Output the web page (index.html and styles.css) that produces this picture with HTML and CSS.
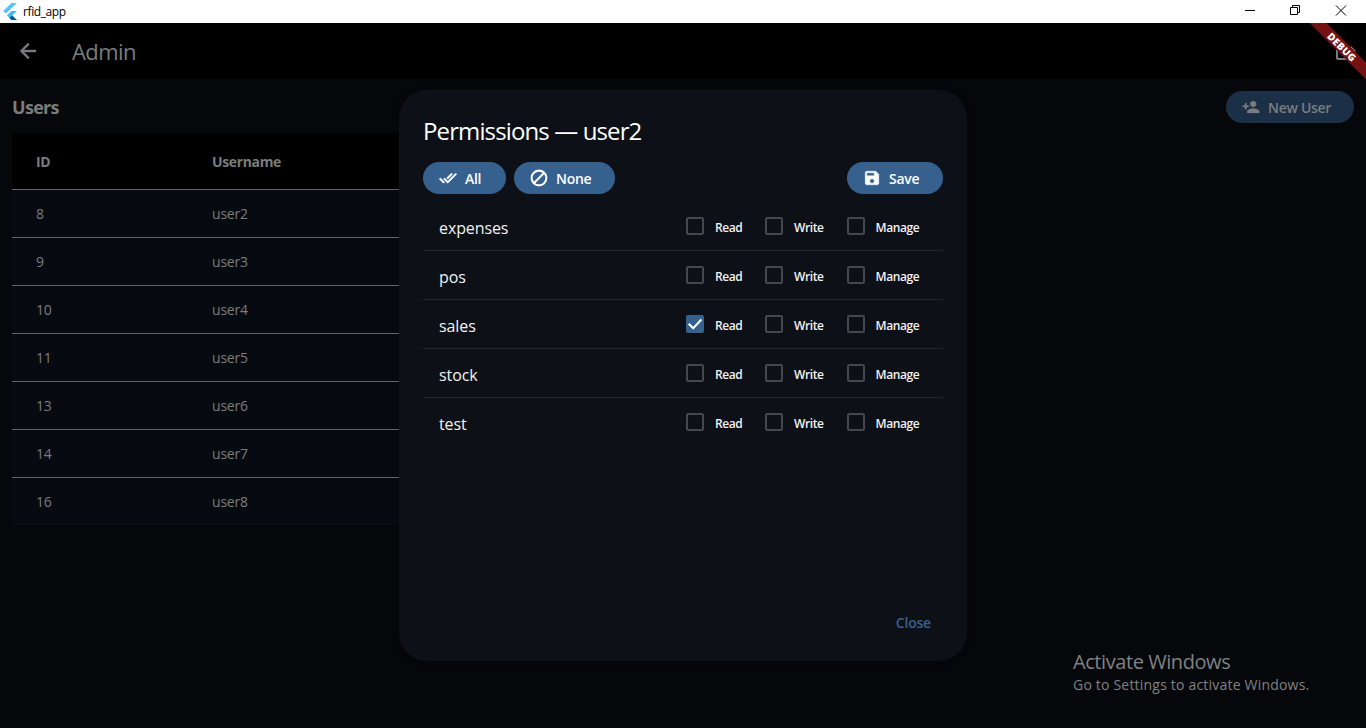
FILE: index.html
```html
<!DOCTYPE html>
<html lang="en">
<head>
<meta charset="utf-8">
<title>rfid_app</title>
<link rel="stylesheet" href="styles.css">
</head>
<body>
<div class="window">
  <header class="titlebar">
    <svg class="logo" width="14" height="17" viewBox="0 0 24 30"><path d="M14.500 0H24L5 18.500 0 14z" fill="#54c5f8"/><path d="M14.500 14H24L16 22l8 8h-9.500l-8-8z" fill="#45b8f0"/><path d="M11 26l5-4 8 8h-9.500z" fill="#01579b"/></svg>
    <span class="window-name">rfid_app</span>
    <svg class="controls" width="130" height="23" viewBox="0 0 130 23" fill="none" stroke="#000"><path d="M9 10.500h10"/><path d="M54.500 7.500h7v7h-7zM56.500 7V5.500h7v7H62"/><path d="M100 5.500l10 10m0-10l-10 10"/></svg>
  </header>
  <div class="appbar">
    <svg class="back" width="24" height="24" viewBox="0 0 24 24" fill="currentColor" stroke="currentColor" stroke-width=".4"><path d="M20 11H7.830l5.590-5.590L12 4l-8 8 8 8 1.410-1.410L7.830 13H20z"/></svg>
    <h1 class="admin">Admin</h1>
    <svg class="logout" width="24" height="24" viewBox="0 0 24 24" fill="currentColor"><path d="M17 7l-1.410 1.410L18.170 11H8v2h10.170l-2.580 2.580L17 17l5-5zM4 5h8V3H4c-1.100 0-2 .9-2 2v14c0 1.100.9 2 2 2h8v-2H4z"/></svg>
    <div class="debug"><span>DEBUG</span></div>
  </div>
  <main class="page">
    <div class="page-head">
      <h2 class="users">Users</h2>
      <button class="pill new-user"><svg width="18" height="18" viewBox="0 0 24 24" fill="currentColor" stroke="currentColor" stroke-width=".4"><path d="M15 12c2.210 0 4-1.790 4-4s-1.790-4-4-4-4 1.790-4 4 1.790 4 4 4zm-9-2V7H4v3H1v2h3v3h2v-3h3v-2H6zm9 4c-2.670 0-8 1.340-8 4v2h16v-2c0-2.660-5.330-4-8-4z"/></svg><span>New User</span></button>
    </div>
    <div class="table">
      <div class="tr th"><span>ID</span><span>Username</span></div>
      <div class="tr"><span>8</span><span>user2</span></div>
      <div class="tr"><span>9</span><span>user3</span></div>
      <div class="tr"><span>10</span><span>user4</span></div>
      <div class="tr"><span>11</span><span>user5</span></div>
      <div class="tr"><span>13</span><span>user6</span></div>
      <div class="tr"><span>14</span><span>user7</span></div>
      <div class="tr"><span>16</span><span>user8</span></div>
    </div>
  </main>
  <section class="dialog">
    <h2 class="dialog-title">Permissions — user2</h2>
    <div class="actions">
      <button class="pill all"><svg width="18" height="18" viewBox="0 0 24 24" fill="currentColor" stroke="currentColor" stroke-width=".8"><path d="M18 7l-1.410-1.410-6.340 6.340 1.410 1.410L18 7zm4.240-1.410L11.660 16.170 7.480 12l-1.410 1.410L11.660 19l12-12-1.420-1.410zM.41 13.410L6 19l1.410-1.410L1.830 12 .41 13.410z"/></svg><span>All</span></button>
      <button class="pill none"><svg width="18" height="18" viewBox="1 1 22 22" fill="none" stroke="currentColor" stroke-width="2.500"><circle cx="12" cy="12" r="9"/><path d="M18.300 5.700L5.700 18.300"/></svg><span>None</span></button>
      <button class="pill save"><svg width="18" height="18" viewBox="0 0 24 24" fill="currentColor" stroke="currentColor" stroke-width=".6"><path d="M17 3H5c-1.110 0-2 .9-2 2v14c0 1.100.89 2 2 2h14c1.100 0 2-.9 2-2V7l-4-4zm-5 16c-1.660 0-3-1.340-3-3s1.340-3 3-3 3 1.340 3 3-1.340 3-3 3zm3-10H5V5h10v4z"/></svg><span>Save</span></button>
    </div>
    <div class="perms">
      <div class="perm"><span class="name">expenses</span><i class="box"></i><b>Read</b><i class="box"></i><b>Write</b><i class="box"></i><b>Manage</b></div>
      <div class="perm"><span class="name">pos</span><i class="box"></i><b>Read</b><i class="box"></i><b>Write</b><i class="box"></i><b>Manage</b></div>
      <div class="perm"><span class="name">sales</span><i class="box checked"><svg width="18" height="18" viewBox="0 0 18 18" fill="none" stroke="#fff" stroke-width="2"><path d="M2.700 8.800l4.500 4.400 8.200-8.700"/></svg></i><b>Read</b><i class="box"></i><b>Write</b><i class="box"></i><b>Manage</b></div>
      <div class="perm"><span class="name">stock</span><i class="box"></i><b>Read</b><i class="box"></i><b>Write</b><i class="box"></i><b>Manage</b></div>
      <div class="perm"><span class="name">test</span><i class="box"></i><b>Read</b><i class="box"></i><b>Write</b><i class="box"></i><b>Manage</b></div>
    </div>
    <button class="close">Close</button>
  </section>
  <aside class="activate"><div class="act-title">Activate Windows</div><div class="act-sub">Go to Settings to activate Windows.</div></aside>
</div>
</body>
</html>
```
FILE: styles.css
```css
* { box-sizing: border-box; }
body { margin: 0; background: #05070a; font-family: "Open Sans", "Noto Sans", sans-serif; }
h1, h2 { margin: 0; font-weight: 400; }
button { border: 0; margin: 0; padding: 0; font: inherit; background: none; }
svg { display: block; flex: none; }
.window { position: relative; width: 1366px; height: 728px; overflow: hidden; color: #7b7c7d; white-space: nowrap; }
.titlebar { height: 23px; background: #fff; display: flex; align-items: center; padding-left: 3px; color: #000; }
.logo { margin-right: 6px; }
.window-name { font-size: 12px; line-height: 22px; letter-spacing: -0.4px; flex: 1; padding-top: 1px; }
.appbar { position: relative; height: 56px; background: #000; display: flex; align-items: center; padding: 0 8px 0 16px; overflow: hidden; }
.admin { margin-left: 32px; font-size: 22px; line-height: 30px; flex: 1; letter-spacing: -0.6px; }
.debug { position: absolute; right: -36px; top: 18px; width: 120px; height: 12px; background: #741112; transform: rotate(45deg); color: #fff; font-size: 10px; line-height: 12px; font-weight: 800; letter-spacing: 0.3px; text-align: center; }
.page { padding: 12px; }
.page-head { height: 32px; display: flex; align-items: center; justify-content: space-between; }
.users { font-size: 18px; font-weight: 700; letter-spacing: -0.7px; }
.pill { height: 32px; border-radius: 16px; display: flex; align-items: center; padding-left: 16px; background: #36618e; color: #fff; font-size: 14px; font-weight: 600; gap: 8px; letter-spacing: -0.3px; }
.pill span { padding-top: 1px; }
.new-user { width: 128px; background: #1b3047; color: #7b7c7d; }
.table { width: 560px; margin-top: 10px; font-size: 14px; background: #070a11; letter-spacing: -0.2px; }
.tr { height: 48px; display: grid; grid-template-columns: 176px 1fr; align-items: center; padding: 0 24px; border-top: 1px solid #626667; }
.th { height: 56px; background: #000; font-weight: 700; border: 0; letter-spacing: -0.35px; }
.dialog { position: absolute; left: 399px; top: 90px; width: 568px; height: 571px; border-radius: 28px; background: #0d1017; padding: 24px; color: #f2f2f2; display: flex; flex-direction: column; box-shadow: 0 0 6px #0004; }
.dialog-title { font-size: 24px; line-height: 34px; height: 48px; color: #fff; letter-spacing: -0.88px; }
.actions { display: flex; gap: 8px; }
.all { width: 83px; }
.none { width: 101px; }
.save { width: 96px; margin-left: auto; }
.perms { margin-top: 8px; flex: 1; }
.perm { height: 49px; display: grid; grid-template-columns: 247px 18px 61px 18px 63.5px 18px 70px; align-items: center; padding-left: 16px; border-bottom: 1px solid #23262d; }
.perm:last-child { border-color: transparent; }
.name { font-size: 16px; padding-top: 3px; letter-spacing: -0.1px; }
.perm b { font-size: 12px; font-weight: 600; padding: 2px 0 0 11px; letter-spacing: -0.4px; }
.box { width: 18px; height: 18px; border: 2px solid #43474e; border-radius: 2px; }
.checked { border: 0; background: #36618e; }
.close { align-self: flex-end; margin-right: 12px; font-size: 14px; font-weight: 600; color: #36618e; line-height: 20px; margin-bottom: 4px; letter-spacing: -0.2px; }
.activate { position: absolute; left: 1073px; top: 648px; color: #808182; }
.act-title { font-size: 20px; line-height: 27px; letter-spacing: -0.43px; }
.act-sub { font-size: 14px; line-height: 19px; letter-spacing: 0.2px; }
```
